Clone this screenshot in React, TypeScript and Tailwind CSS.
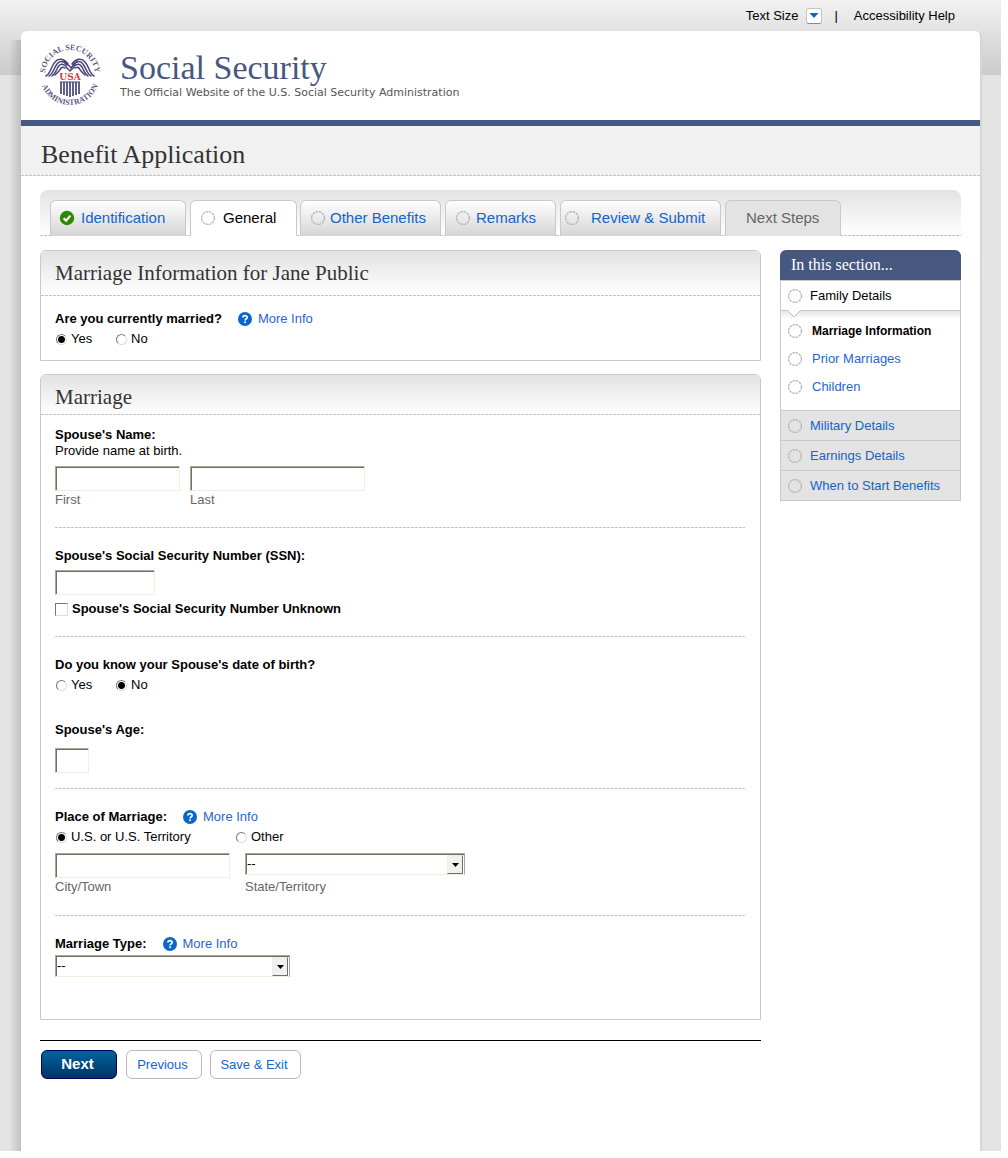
import React, { useState } from 'react';

interface Tab {
  label: string;
  status: 'done' | 'current' | 'pending' | 'disabled';
  className: string;
}

const TABS: Tab[] = [
  { label: 'Identification', status: 'done', className: 'mr-1 w-[136px] pl-2 gap-[6px]' },
  { label: 'General', status: 'current', className: 'mr-[3px] w-[107px] pl-[10px] gap-2' },
  { label: 'Other Benefits', status: 'pending', className: 'mr-1 w-[141px] pl-[10px] gap-[5px]' },
  { label: 'Remarks', status: 'pending', className: 'mr-1 w-[111px] pl-[10px] gap-[6px]' },
  { label: 'Review & Submit', status: 'pending', className: 'mr-1 w-[161px] pl-1 gap-3' },
  { label: 'Next Steps', status: 'disabled', className: 'w-[116px] pl-5' },
];

const SUB_ITEMS = ['Marriage Information', 'Prior Marriages', 'Children'];
const LATER_ITEMS = ['Military Details', 'Earnings Details', 'When to Start Benefits'];

function Seal() {
  return (
    <svg
      viewBox="0 0 62 62"
      className="h-[62px] w-[62px] shrink-0 overflow-visible"
      role="img"
      aria-label="Social Security Administration seal"
    >
      <defs>
        <path id="seal-top" d="M 6 31 A 25 25 0 0 1 56 31" />
        <path id="seal-bottom" d="M 1 31 A 30 30 0 0 0 61 31" />
      </defs>
      <g fill="#5a5a85" fontFamily="'Liberation Serif', serif" fontWeight="bold" fontSize="8" textAnchor="middle">
        <text>
          <textPath href="#seal-top" startOffset="50%">SOCIAL SECURITY</textPath>
        </text>
        <text>
          <textPath href="#seal-bottom" startOffset="50%">ADMINISTRATION</textPath>
        </text>
      </g>
      <g fill="none" stroke="#45447a" strokeWidth="1.5" strokeLinecap="round">
        <path d="M29 20 C25 14 19 14 16 18 C12 22 12 29 7 32" />
        <path d="M28 21 C24 16 20 17 18 20 C15 24 14 30 10 32" />
        <path d="M27 22 C23 19 21 20 19 23 C17 27 16 30 13 32" />
        <path d="M26 24 C23 22 22 24 20 27 L16 31" />
        <path d="M33 20 C37 14 43 14 46 18 C50 22 50 29 55 32" />
        <path d="M34 21 C38 16 42 17 44 20 C47 24 48 30 52 32" />
        <path d="M35 22 C39 19 41 20 43 23 C45 27 46 30 49 32" />
        <path d="M36 24 C39 22 40 24 42 27 L46 31" />
        <path d="M25 17 C28 22 30 20 32 24 C34 21 35 21 38 17" />
        <path d="M27 23 L31 27 L35 23" />
      </g>
      <text x="31" y="36" textAnchor="middle" fill="#e0383e" fontFamily="'DejaVu Serif', serif" fontWeight="bold" fontSize="9">
        USA
      </text>
      <path
        d="M22 38V50M25 38V51M28 38V52M31 38V53M34 38V52M37 38V51M40 38V50"
        stroke="#45447a"
        strokeWidth="1.7"
      />
      <path d="M21 38H41" stroke="#45447a" strokeWidth="1" />
    </svg>
  );
}

function PendingIcon() {
  return (
    <svg viewBox="0 0 14 14" className="h-[14px] w-[14px] shrink-0" aria-hidden="true">
      <circle cx="7" cy="7" r="6.4" fill="none" stroke="#b0b0b0" strokeWidth="1.2" strokeDasharray="2.5 0.85" />
    </svg>
  );
}

function DoneIcon() {
  return (
    <svg viewBox="0 0 16 16" className="h-4 w-4 shrink-0" aria-hidden="true">
      <circle cx="8" cy="8" r="7.2" fill="#2b8a00" />
      <path d="M4.6 8.2 L7.1 10.6 L11.4 5.6" fill="none" stroke="#fff" strokeWidth="2.2" />
    </svg>
  );
}

function HelpIcon() {
  return (
    <svg viewBox="0 0 14 14" className="h-[14px] w-[14px] shrink-0" aria-hidden="true">
      <circle cx="7" cy="7" r="7" fill="#0b66cc" />
      <path d="M4.9 5.5 C4.9 3.1 9.2 3.1 9.2 5.4 C9.2 6.8 7.1 6.7 7.1 8.5" fill="none" stroke="#fff" strokeWidth="1.7" />
      <rect x="6.2" y="9.4" width="1.8" height="1.7" fill="#fff" />
    </svg>
  );
}

function Dashes() {
  return <div className="h-px bg-[repeating-linear-gradient(90deg,#c4c4c4_0_3px,transparent_3px_4px)]" />;
}

function MoreInfo() {
  return (
    <a href="#more-info" className="flex items-center gap-[6px] font-normal text-[#2a66cc]">
      <HelpIcon />
      More Info
    </a>
  );
}

interface PanelProps {
  title: string;
  headerClassName: string;
  children: React.ReactNode;
}

function Panel({ title, headerClassName, children }: PanelProps) {
  return (
    <section className="rounded-t-md border border-[#c9c9c9]">
      <h2
        className={`flex items-center rounded-t-md bg-linear-to-b from-[#e2e2e2] to-white px-[14px] font-['Georgia','Liberation_Serif',serif] text-[21px] text-[#333] ${headerClassName}`}
      >
        {title}
      </h2>
      <Dashes />
      {children}
    </section>
  );
}

interface RadioProps {
  name: string;
  label: string;
  checked: boolean;
  onChange: () => void;
  className?: string;
}

function Radio({ name, label, checked, onChange, className = '' }: RadioProps) {
  return (
    <label className={`flex items-center gap-1 ${className}`}>
      <input
        type="radio"
        name={name}
        checked={checked}
        onChange={onChange}
        className="ml-px h-[11px] w-[11px] appearance-none rounded-full border border-t-[#777] border-r-[#ddd] border-b-[#ddd] border-l-[#777] bg-white checked:bg-[radial-gradient(circle,#000_3px,#fff_4px)]"
      />
      {label}
    </label>
  );
}

interface FieldProps {
  id: string;
  label?: string;
  className: string;
}

function TextField({ id, label, className }: FieldProps) {
  return (
    <div className="flex flex-col">
      <input
        id={id}
        type="text"
        className={`h-[25px] border border-t-[#aca899] border-r-[#f1efe2] border-b-[#f1efe2] border-l-[#aca899] bg-white px-1 shadow-[inset_1px_1px_0_#716f64] outline-none ${className}`}
      />
      {label && (
        <label htmlFor={id} className="pt-px leading-4 text-[#666]">
          {label}
        </label>
      )}
    </div>
  );
}

function SelectField({ id, label, className }: FieldProps) {
  return (
    <div className="flex flex-col justify-between">
      <div className={`relative h-[22px] ${className}`}>
        <select
          id={id}
          className="h-full w-full appearance-none border border-t-[#aca899] border-r-[#aca899] border-b-[#f1efe2] border-l-[#aca899] bg-white pl-px shadow-[inset_1px_1px_0_#716f64] outline-none"
        >
          <option>--</option>
        </select>
        <span className="pointer-events-none absolute top-[2px] right-[2px] bottom-[1px] flex w-4 items-center justify-center border border-t-[#f1efe2] border-r-[#716f64] border-b-[#716f64] border-l-[#f1efe2] bg-[#f0f0f0]">
          <svg viewBox="0 0 7 4" className="h-1 w-[7px]" aria-hidden="true">
            <path d="M0 0H7L3.5 4Z" fill="#000" />
          </svg>
        </span>
      </div>
      {label && (
        <label htmlFor={id} className="leading-4 text-[#666]">
          {label}
        </label>
      )}
    </div>
  );
}

function TabBar() {
  return (
    <nav aria-label="Application steps" className="rounded-t-lg bg-linear-to-b from-[#e3e3e3] to-white pt-[10px]">
      <div className="flex items-end bg-[repeating-linear-gradient(90deg,#c4c4c4_0_3px,transparent_3px_4px)] bg-[length:100%_1px] bg-bottom bg-no-repeat pl-[10px] text-[15px]">
        {TABS.map((tab) => {
          const look =
            tab.status === 'current'
              ? 'bg-white text-black'
              : tab.status === 'disabled'
                ? 'bg-[#e3e3e3] text-[#666]'
                : 'bg-linear-to-b from-white to-[#d5d5d5] text-[#1464cc]';
          return (
            <a
              key={tab.label}
              href={`#${tab.label}`}
              className={`flex h-9 items-center rounded-t-md border border-b-0 border-[#c9c9c9] pb-[2px] ${tab.className} ${look}`}
            >
              {tab.status === 'done' && <DoneIcon />}
              {(tab.status === 'current' || tab.status === 'pending') && <PendingIcon />}
              {tab.label}
            </a>
          );
        })}
      </div>
    </nav>
  );
}

function Sidebar() {
  return (
    <aside className="w-[181px] shrink-0">
      <h2 className="flex h-[30px] items-center rounded-t-md bg-[#465780] px-[11px] font-['Georgia','Liberation_Serif',serif] text-[16px] text-white">
        In this section...
      </h2>
      <ul className="border border-[#c9c9c9]">
        <li className="flex h-[29px] items-center gap-2 pl-[7px]">
          <PendingIcon />
          Family Details
        </li>
        <li className="relative h-[100px] border-t border-[#c9c9c9] bg-linear-to-b from-[#e6e6e6] to-white to-8% pt-[6px]">
          <svg viewBox="0 0 14 8" className="absolute -top-px left-[6px] h-2 w-[14px]" aria-hidden="true">
            <path d="M0.5 0.5 L7 7 L13.5 0.5" fill="#fff" stroke="#bbb" />
            <path d="M1 0.5H13" stroke="#fff" />
          </svg>
          <ul>
            {SUB_ITEMS.map((item, index) => (
              <li key={item} className="flex h-[28px] items-center gap-[10px] pl-[7px]">
                <PendingIcon />
                {index === 0 ? (
                  <strong className="text-[12px]">{item}</strong>
                ) : (
                  <a href={`#${item}`} className="text-[#2a66cc]">
                    {item}
                  </a>
                )}
              </li>
            ))}
          </ul>
        </li>
        {LATER_ITEMS.map((item) => (
          <li key={item} className="flex h-[30px] items-center gap-2 border-t border-[#c9c9c9] bg-[#e3e3e3] pl-[7px]">
            <PendingIcon />
            <a href={`#${item}`} className="text-[#1464cc]">
              {item}
            </a>
          </li>
        ))}
      </ul>
    </aside>
  );
}

export default function App() {
  const [married, setMarried] = useState('yes');
  const [knowsBirthDate, setKnowsBirthDate] = useState('no');
  const [place, setPlace] = useState('us');

  return (
    <div className="mr-[7px] bg-[#e3e3e3] bg-[linear-gradient(#f2f2f2,#cbcbcb)] bg-[length:100%_75px] bg-no-repeat font-['Liberation_Sans',Arial,sans-serif] text-[13px] leading-4 text-black">
      <div className="flex h-[31px] items-center justify-end pr-[46px]">
        <label htmlFor="text-size">Text Size</label>
        <button
          id="text-size"
          type="button"
          className="ml-2 flex h-4 w-4 items-center justify-center rounded-[3px] border border-[#c4c4c4] border-b-[#888] bg-white"
        >
          <svg viewBox="0 0 10 5" className="h-[5px] w-[10px] shrink-0" aria-hidden="true">
            <path d="M0.5 0H9.5L5 5Z" fill="#0b66cc" />
          </svg>
        </button>
        <span className="mr-4 ml-3">|</span>
        <a href="#accessibility">Accessibility Help</a>
      </div>

      <div className="flex">
        <div className="mt-[9px] w-[21px] shrink-0 bg-linear-to-r from-transparent from-45% to-black/15" />
        <div className="mr-[19px] flex-1 rounded-t-md border-r-2 border-[#d6d6d6] bg-white pb-[72px]">
          <header className="flex h-[95px] items-start border-b-[6px] border-[#465780] pt-[13px] pl-[18px]">
            <Seal />
            <div className="ml-[19px] pt-[6px]">
              <p className="font-['Georgia','Liberation_Serif',serif] text-[34px] leading-9 text-[#465780]">Social Security</p>
              <p className="font-['DejaVu_Sans',Verdana,sans-serif] text-[11px] leading-[14px] text-[#555]">
                The Official Website of the U.S. Social Security Administration
              </p>
            </div>
          </header>

          <div className="bg-[#f1f1f1]">
            <h1 className="flex h-[49px] items-center px-5 pt-[9px] font-['Georgia','Liberation_Serif',serif] text-[26px] text-[#333]">
              Benefit Application
            </h1>
            <Dashes />
          </div>

          <div className="px-[19px] pt-[14px]">
            <TabBar />

            <div className="mt-[14px] flex items-start gap-[19px]">
              <main className="flex-1">
                <Panel title="Marriage Information for Jane Public" headerClassName="h-[44px]">
                  <div role="group" aria-labelledby="married-question" className="px-[14px] pt-[13px] pb-[11px]">
                    <div className="flex h-5 items-center gap-4 font-bold">
                      <span id="married-question">Are you currently married?</span>
                      <MoreInfo />
                    </div>
                    <div className="flex h-5 items-center">
                      <Radio name="married" label="Yes" checked={married === 'yes'} onChange={() => setMarried('yes')} className="w-[60px]" />
                      <Radio name="married" label="No" checked={married === 'no'} onChange={() => setMarried('no')} />
                    </div>
                  </div>
                </Panel>

                <div className="mt-[13px]">
                  <Panel title="Marriage" headerClassName="h-[39px] pt-1">
                    <div className="pr-[15px] pb-[42px] pl-[14px]">
                      <div className="pt-3 pb-[19px]">
                        <p className="font-bold">Spouse's Name:</p>
                        <p>Provide name at birth.</p>
                        <div className="mt-[7px] flex gap-[10px]">
                          <TextField id="first-name" label="First" className="w-[125px]" />
                          <TextField id="last-name" label="Last" className="w-[175px]" />
                        </div>
                      </div>
                      <Dashes />

                      <div className="pt-5 pb-[19px]">
                        <label htmlFor="ssn" className="block font-bold">
                          Spouse's Social Security Number (SSN):
                        </label>
                        <div className="mt-[6px] flex">
                          <TextField id="ssn" className="w-[100px]" />
                        </div>
                        <label className="mt-[6px] flex items-center gap-1 font-bold">
                          <input
                            type="checkbox"
                            className="h-[13px] w-[13px] appearance-none border border-t-[#777] border-r-[#ddd] border-b-[#ddd] border-l-[#777] bg-white checked:bg-[#777]"
                          />
                          Spouse's Social Security Number Unknown
                        </label>
                      </div>
                      <Dashes />

                      <div className="pt-5 pb-[15px]">
                        <p className="font-bold">Do you know your Spouse's date of birth?</p>
                        <div className="flex h-6 items-center">
                          <Radio name="birth" label="Yes" checked={knowsBirthDate === 'yes'} onChange={() => setKnowsBirthDate('yes')} className="w-[60px]" />
                          <Radio name="birth" label="No" checked={knowsBirthDate === 'no'} onChange={() => setKnowsBirthDate('no')} />
                        </div>
                        <label htmlFor="age" className="mt-[25px] block font-bold">
                          Spouse's Age:
                        </label>
                        <div className="mt-[10px] flex">
                          <TextField id="age" className="w-[34px]" />
                        </div>
                      </div>
                      <Dashes />

                      <div className="pt-5 pb-5">
                        <div className="flex items-center gap-4 font-bold">
                          Place of Marriage:
                          <MoreInfo />
                        </div>
                        <div className="flex h-6 items-center">
                          <Radio name="place" label="U.S. or U.S. Territory" checked={place === 'us'} onChange={() => setPlace('us')} className="w-[180px]" />
                          <Radio name="place" label="Other" checked={place === 'other'} onChange={() => setPlace('other')} />
                        </div>
                        <div className="mt-1 flex gap-[15px]">
                          <TextField id="city" label="City/Town" className="w-[175px]" />
                          <SelectField id="state" label="State/Territory" className="w-[220px]" />
                        </div>
                      </div>
                      <Dashes />

                      <div className="pt-5">
                        <div className="flex items-center gap-4 font-bold">
                          <label htmlFor="marriage-type">Marriage Type:</label>
                          <MoreInfo />
                        </div>
                        <div className="mt-[3px] flex">
                          <SelectField id="marriage-type" className="w-[235px]" />
                        </div>
                      </div>
                    </div>
                  </Panel>
                </div>

                <div className="mt-5 flex border-t border-black pt-[9px] pl-px">
                  <button
                    type="button"
                    className="h-[29px] w-[76px] rounded-md border border-[#00005c] bg-linear-to-b from-[#00659c] to-[#003366] pr-[3px] pb-[2px] text-[15px] font-bold text-white"
                  >
                    Next
                  </button>
                  <button type="button" className="ml-[9px] h-[29px] w-[76px] rounded-md border border-[#b8b8b8] bg-white pr-[3px] text-[#1464cc]">
                    Previous
                  </button>
                  <button type="button" className="ml-2 h-[29px] w-[91px] rounded-md border border-[#b8b8b8] bg-white pr-[3px] text-[#1464cc]">
                    Save &amp; Exit
                  </button>
                </div>
              </main>

              <Sidebar />
            </div>
          </div>
        </div>
      </div>
    </div>
  );
}
